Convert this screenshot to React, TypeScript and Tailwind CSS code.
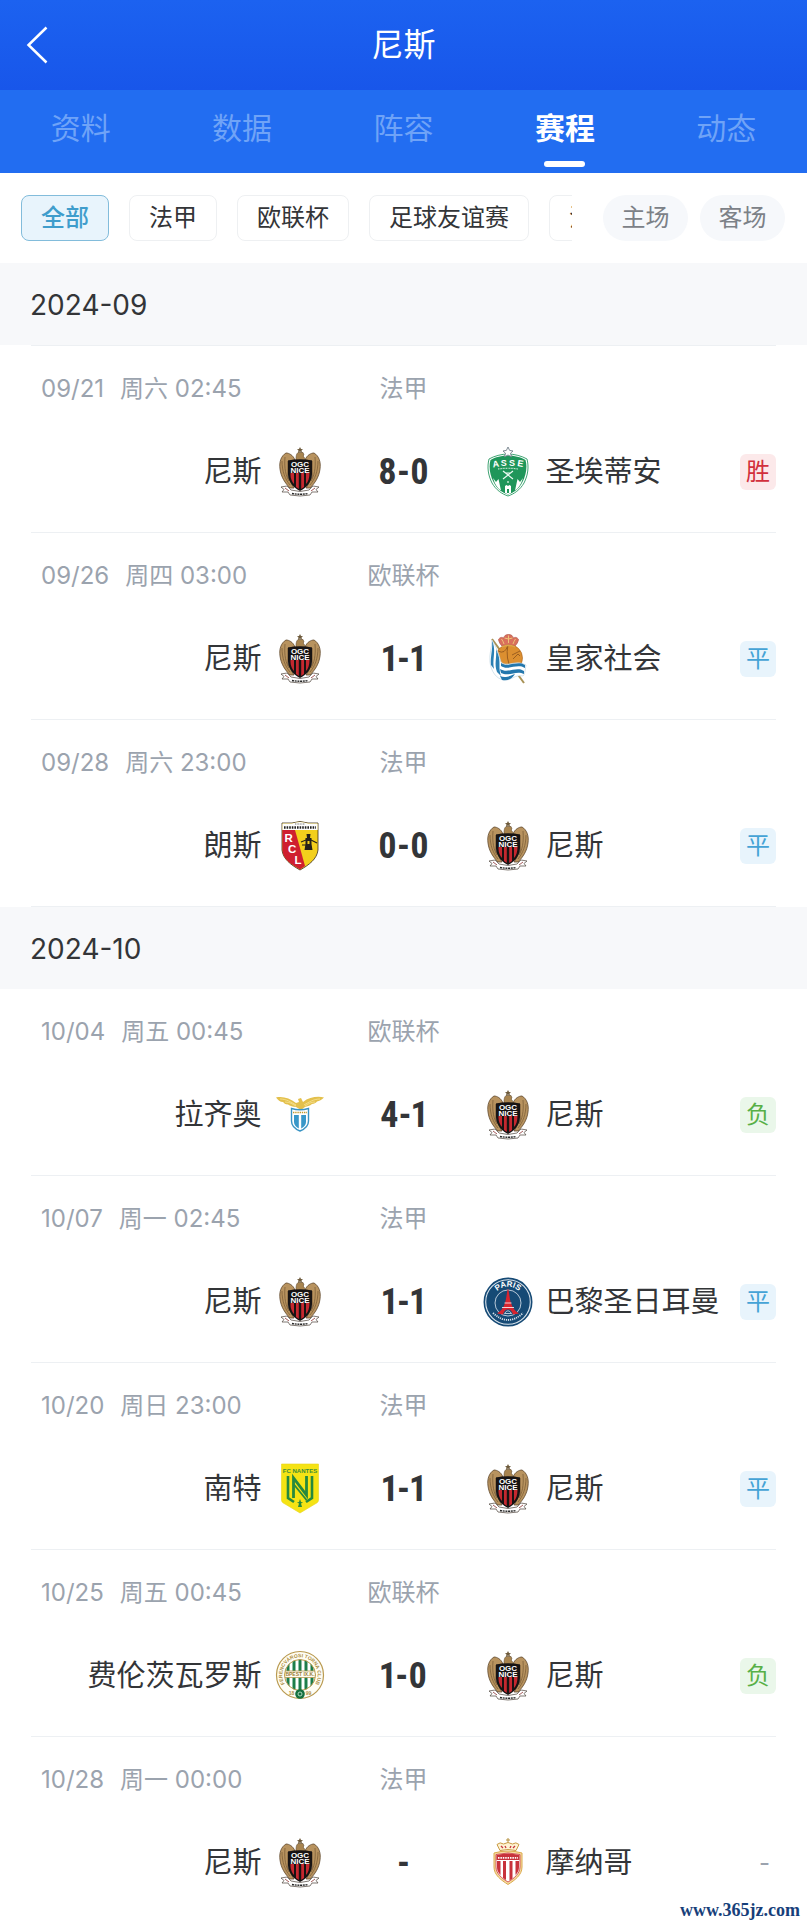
import React, { useState } from 'react';

type TeamKey = 'nice' | 'asse' | 'sociedad' | 'lens' | 'lazio' | 'psg' | 'nantes' | 'ferencvaros' | 'monaco';

interface Match {
  date: string;
  time: string;
  league: string;
  home: TeamKey;
  away: TeamKey;
  score: string;
  result: 'win' | 'draw' | 'loss' | null;
}

const TEAM_NAMES: Record<TeamKey, string> = {
  nice: '尼斯',
  asse: '圣埃蒂安',
  sociedad: '皇家社会',
  lens: '朗斯',
  lazio: '拉齐奥',
  psg: '巴黎圣日耳曼',
  nantes: '南特',
  ferencvaros: '费伦茨瓦罗斯',
  monaco: '摩纳哥',
};

const MONTHS: { month: string; matches: Match[] }[] = [
  {
    month: '2024-09',
    matches: [
      { date: '09/21', time: '周六 02:45', league: '法甲', home: 'nice', away: 'asse', score: '8-0', result: 'win' },
      { date: '09/26', time: '周四 03:00', league: '欧联杯', home: 'nice', away: 'sociedad', score: '1-1', result: 'draw' },
      { date: '09/28', time: '周六 23:00', league: '法甲', home: 'lens', away: 'nice', score: '0-0', result: 'draw' },
    ],
  },
  {
    month: '2024-10',
    matches: [
      { date: '10/04', time: '周五 00:45', league: '欧联杯', home: 'lazio', away: 'nice', score: '4-1', result: 'loss' },
      { date: '10/07', time: '周一 02:45', league: '法甲', home: 'nice', away: 'psg', score: '1-1', result: 'draw' },
      { date: '10/20', time: '周日 23:00', league: '法甲', home: 'nantes', away: 'nice', score: '1-1', result: 'draw' },
      { date: '10/25', time: '周五 00:45', league: '欧联杯', home: 'ferencvaros', away: 'nice', score: '1-0', result: 'loss' },
      { date: '10/28', time: '周一 00:00', league: '法甲', home: 'nice', away: 'monaco', score: '-', result: null },
    ],
  },
];

const TABS = ['资料', '数据', '阵容', '赛程', '动态'];
const LEAGUES = ['全部', '法甲', '欧联杯', '足球友谊赛', '法国杯'];

const RESULTS = {
  win: { label: '胜', style: 'bg-[#fce9ea] text-[#d2303c]' },
  draw: { label: '平', style: 'bg-[#e8f4fc] text-[#45a3d6]' },
  loss: { label: '负', style: 'bg-[#eaf7ea] text-[#58b047]' },
};

function NiceCrest() {
  return (
    <>
      {/* asas */}
      <path d="M19 13 C17 8 13 6 10 6 C5 9 3 15 4 22 C5 30 9 36 14 41 L18 41 L12 30 V14Z" fill="#b8935f" stroke="#5f482c" strokeWidth=".8" />
      <path d="M29 13 C31 8 35 6 38 6 C43 9 45 15 44 22 C43 30 39 36 34 41 L30 41 L36 30 V14Z" fill="#b8935f" stroke="#5f482c" strokeWidth=".8" />
      <path d="M6 14 C6 24 9 32 14 38 M9 10 C8 22 10 29 13 34 M42 14 C42 24 39 32 34 38 M39 10 C40 22 38 29 35 34" stroke="#7d6038" strokeWidth=".8" fill="none" />
      <path d="M20 14 C20 10 20 7 22 5.500 L27 5.500 L28 8 L27 9 C29 11 29 12 29 14Z" fill="#a8844f" stroke="#5f482c" strokeWidth=".6" />
      <path d="M24 0 L25 2 L27 2.200 L25.500 3.500 L26 5.500 L24 4.400 L22 5.500 L22.500 3.500 L21 2.200 L23 2Z" fill="#6d5a3b" />
      <path d="M12 13.500 Q24 11 36 13.500 V27 C36 35 30 41 24 44 C18 41 12 35 12 27Z" fill="#171313" />
      <path d="M14.500 26 H18 V37 C16 35 14.500 31 14.500 28Z M20 26 H22.800 V42 L20 40Z M25.200 26 H28 V40 L25.200 42Z M30 26 H33.500 C33.500 31 32 35 30 37Z" fill="#c5282f" />
      <text x="24" y="19.800" textAnchor="middle" fontSize="8" fontWeight="700" fill="#fff">OGC</text>
      <text x="24" y="26" textAnchor="middle" fontSize="8" fontWeight="700" fill="#fff">NICE</text>
      <path d="M5 40 L11 39 L15 43 Q24 46 33 43 L37 39 L43 40 L40 42.500 L42 45 L36 45 L34 48 Q24 50 14 48 L12 45 L6 45 L8 42.500Z" fill="#fff" stroke="#4b4138" strokeWidth=".7" />
      <path d="M16 46.500 Q24 48 32 46.500" stroke="#222" strokeWidth="1.400" strokeDasharray="2 .7" fill="none" />
      <path d="M9 41 L13 44 M39 41 L35 44" stroke="#8d3030" strokeWidth=".8" />
    </>
  );
}

function AsseCrest() {
  return (
    <>
      <path d="M24 7 C30 7 38 9 43 12 C45 20 44 28 40 36 C36 43 30 47 24 49 C18 47 12 43 8 36 C4 28 3 20 5 12 C10 9 18 7 24 7Z" fill="#fff" stroke="#2b9a64" strokeWidth=".9" />
      <path d="M24 8.500 C30 8.500 37 10 41.500 13 C43.500 20 42 28 38.500 35 C35 42 30 45.500 24 47.500 C18 45.500 13 42 9.500 35 C6 28 4.500 20 6.500 13 C11 10 18 8.500 24 8.500Z" fill="#1f965a" />
      <text x="9" y="20.500" fontSize="9" fontWeight="700" fill="#fff" transform="rotate(-9 9 20)">A</text>
      <text x="16.800" y="19.200" fontSize="9" fontWeight="700" fill="#fff">S</text>
      <text x="25" y="19.200" fontSize="9" fontWeight="700" fill="#fff">S</text>
      <text x="33" y="19" fontSize="9" fontWeight="700" fill="#fff" transform="rotate(9 33 19)">E</text>
      <path d="M14 22 Q24 20.500 34 22" stroke="#c9ead7" strokeWidth="1.200" strokeDasharray="1 .6" fill="none" />
      <path d="M19 24 L29 32 M29 24 L19 32 M21 26 H27" stroke="#eefaf3" strokeWidth="1.200" />
      <circle cx="24" cy="35" r="1" fill="#bfe5cf" />
      <path d="M9 31 L12 35 L14.500 32 L17 43.500 C13 41 10.500 36 9 31Z M39 31 L36 35 L33.500 32 L31 43.500 C35 41 37.500 36 39 31Z" fill="#fff" />
      <path d="M21 46 V39 L22.500 38 L24 39 L25.500 38 L27 39 V46 L24 47.200Z" fill="#fff" />
      <path d="M23 46 V42 H25 V46" fill="#1f965a" />
      <path d="M24 0 L25.600 3.400 L29 4 L26.500 6.200 L27.500 9.800 L24 8 L20.500 9.800 L21.500 6.200 L19 4 L22.400 3.400Z" fill="#fff" stroke="#73808a" strokeWidth=".9" />
    </>
  );
}

function SociedadCrest() {
  return (
    <>
      <path d="M8 5 L40 49" stroke="#a89256" strokeWidth="2" />
      <circle cx="25" cy="24" r="13.500" fill="#dc8f30" stroke="#a9621c" strokeWidth=".6" />
      <path d="M14 17 Q21 21 24 11 M24 11 Q21 24 28 37 M28 21 L36 17 M29 25 L34 20 L36 22" stroke="#8c521c" strokeWidth=".8" fill="none" />
      <path d="M18 12 C16 10 15 8 14.500 5.500 C16 3 18 3 20 4 C20 1.500 22 .5 24.500 .5 C27 .5 29 1.500 29 4 C31 3 33 3 34.500 5.500 C34 8 33 10 31 12 Q24.500 9.500 18 12Z" fill="#d9705c" stroke="#b25345" strokeWidth=".7" />
      <path d="M18 12 Q24.500 9 31 12 V13.500 Q24.500 11 18 13.500Z" fill="#dba547" />
      <path d="M17.500 5 Q19 7 20 10 M24.500 1.500 V9 M31.500 5 Q30 7 29 10 M20.500 4 Q24.500 6 28.500 4" stroke="#edc477" strokeWidth="1" fill="none" />
      <path d="M8 6 C12 12 15 20 17 28 C23 34 31 25 42 31 C41 37 41 40 39 42 C31 40 27 47 20 46 C12 45 7 37 6 28 C5 20 8 13 8 6Z" fill="#fff" stroke="#b8d0df" strokeWidth=".6" />
      <path d="M8 7 C9 15 6 23 7 31 L10 35 C8 25 12 19 9 9Z M12 15 C13 24 10 30 13 38 L17 42 C14 34 17 28 14 20Z" fill="#2a7fb3" />
      <path d="M17 29 C24 34 33 26 41 31 L41 34 C33 29 24 37 17 32Z M16 35 C24 40 32 32 40 37 L40 40 C32 36 25 43 17 39Z M16 42 C22 45 27 41 31 40 C28 45 24 47 18 46Z" fill="#2377ad" />
    </>
  );
}

function LensCrest() {
  return (
    <>
      <path d="M6 2 H16 Q24 -1 32 2 H42 V29 C41 38 33 44 24 49 C15 44 7 38 6 29Z" fill="#f3cf1c" stroke="#3a2d20" strokeWidth=".8" />
      <path d="M6.400 9 H19 L29 45 L24 48.500 C15 43.500 7 38 6.400 29Z" fill="#cf1f2f" />
      <path d="M6.400 2.400 H16 Q24 -.6 32 2.400 H41.600 V9 H6.400Z" fill="#fff" />
      <path d="M8 6.500 H40" stroke="#222" strokeWidth="2.400" strokeDasharray="1.600 1" />
      <path d="M19 3 H29" stroke="#777" strokeWidth="1" strokeDasharray="1 .6" />
      <text x="8.500" y="20.500" fontSize="11.500" fontWeight="700" fill="#fff">R</text>
      <text x="12" y="32" fontSize="11.500" fontWeight="700" fill="#fff">C</text>
      <text x="18.500" y="43" fontSize="11.500" fontWeight="700" fill="#fff">L</text>
      <path d="M30.500 13 H34.500 L34 17 H35.500 V23 L36.500 29 H28.500 L29.500 23 V17 H31Z" fill="#25201a" />
      <path d="M25 21 L30 19 M35 19 L41 22 M26 24 H30" stroke="#25201a" strokeWidth="1.100" />
      <rect x="31.500" y="20" width="2" height="3" fill="#f3cf1c" />
    </>
  );
}

function LazioCrest() {
  return (
    <>
      <path d="M0 7.500 C6 6 14 8 20 13 L23 12 L22 9 L25 8 L27 12 C33 7 42 6 48 7.500 C46 10 43 11 41 11.500 C40 13 38 14 36 14 C34 16 31 16.500 29 17 L25 20 L20 17 C17 17 14 16 12 14.500 C9 14.500 8 13 7 12 C4 12 2 10 0 7.500Z" fill="#e3c04c" />
      <path d="M4 9 C10 9 15 12 20 15 M44 9 C38 9 33 12 28 15 M9 12 C14 12 16 14 20 16 M39 12 C35 12 32 14 29 16" stroke="#fff0b0" strokeWidth=".6" fill="none" />
      <path d="M15.500 18.500 Q24 21 32.500 18.500 V31 C32.500 36 29 39 24 41 C19 39 15.500 36 15.500 31Z" fill="#fff" stroke="#3a94c4" strokeWidth="1.400" />
      <path d="M17 22.500 H31" stroke="#c09a31" strokeWidth="1.600" strokeDasharray="1.400 .8" />
      <path d="M18 25 H22.800 V38.500 C20 37 18 35 18 32Z M25.200 25 H30 V32 C30 35 28 37 25.200 38.500Z" fill="#3897c8" />
    </>
  );
}

function PsgCrest() {
  return (
    <>
      <circle cx="24" cy="25" r="24.500" fill="#164a75" />
      <circle cx="24" cy="25" r="22.300" fill="none" stroke="#dce6ee" strokeWidth="1.100" />
      <circle cx="24" cy="26" r="13" fill="#164a75" stroke="#c9d6e2" strokeWidth=".9" />
      <defs>
        <path id="psg-arc" d="M9.500 19 A16 16 0 0 1 38.500 19" />
      </defs>
      <text fontSize="8" fontWeight="700" fill="#fff" textAnchor="middle">
        <textPath href="#psg-arc" startOffset="50%">PARIS</textPath>
      </text>
      <path d="M24 11.500 C25 13 25.500 22 27 26 C28.500 31 31 34 35 36.500 L29 37.500 C28 34 26.500 32.500 24 32.500 C21.500 32.500 20 34 19 37.500 L13 36.500 C17 34 19.500 31 21 26 C22.500 22 23 13 24 11.500Z" fill="#d8242f" />
      <path d="M18 30.500 H30 M20.500 26 H27.500" stroke="#fff" strokeWidth=".8" />
      <path d="M20.500 36.500 Q24 31 27.500 36.500Z" fill="#164a75" stroke="#dce6ee" strokeWidth=".8" />
      <path d="M9 36 Q24 50 39 36" fill="none" stroke="#d5e0e9" strokeWidth="1.800" strokeDasharray="1.200 .9" />
    </>
  );
}

function NantesCrest() {
  return (
    <>
      <path d="M5.500 0 H42.500 V36 C42.500 38 41 39 39 40 L24 49 L9 40 C7 39 5.500 38 5.500 36Z" fill="#f5e314" stroke="#e8d51d" strokeWidth=".6" />
      <text x="24" y="9" textAnchor="middle" fontSize="6" fontWeight="700" fill="#3f8d37">FC NANTES</text>
      <path d="M12 12 V34 L18 38 M36 12 V34 L30 38" fill="none" stroke="#26893e" strokeWidth="2.600" />
      <path d="M17.500 34 V14 L30.500 31 V12" fill="none" stroke="#26893e" strokeWidth="2.800" />
      <path d="M17.500 20 L30.500 36" stroke="#26893e" strokeWidth="1.800" />
      <path d="M24 35 L25 38 L27 38.500 L25 39.500 L26 43 H22 L23 39.500 L21 38.500 L23 38Z" fill="#26893e" />
    </>
  );
}

function FerencvarosCrest() {
  return (
    <>
      <defs>
        <clipPath id="ftc-inner">
          <circle cx="24" cy="24" r="15.500" />
        </clipPath>
        <path id="ftc-arc" d="M11 36 A17.700 17.700 0 1 1 37 36" />
      </defs>
      <circle cx="24" cy="24" r="23.500" fill="#fffdf4" stroke="#b99a50" strokeWidth="1.200" />
      <circle cx="24" cy="24" r="15.500" fill="#fff" />
      <g clipPath="url(#ftc-inner)">
        <path d="M12 6 V42 M18 6 V42 M24 6 V42 M30 6 V42 M36 6 V42" stroke="#1d7d4a" strokeWidth="3" />
        <rect x="6" y="20" width="36" height="6.500" fill="#fffdf4" stroke="#b99a50" strokeWidth=".8" />
      </g>
      <circle cx="24" cy="24" r="15.500" fill="none" stroke="#b99a50" strokeWidth="1" />
      <text x="24" y="25.200" textAnchor="middle" fontSize="5" fontWeight="700" fill="#9c7d35">BPEST IX.K.</text>
      <text fontSize="5" fontWeight="700" fill="#ad8d43" textAnchor="middle">
        <textPath href="#ftc-arc" startOffset="50%">FERENCVÁROSI TORNA CLUB</textPath>
      </text>
      <text x="15.500" y="43.500" textAnchor="middle" fontSize="5" fontWeight="700" fill="#ad8d43">18</text>
      <text x="32.500" y="43.500" textAnchor="middle" fontSize="5" fontWeight="700" fill="#ad8d43">99</text>
      <circle cx="24" cy="43" r="4.800" fill="#14703f" />
      <circle cx="24" cy="43" r="2" fill="none" stroke="#bfe0cb" strokeWidth=".9" />
    </>
  );
}

function MonacoCrest() {
  return (
    <>
      <path d="M24 0 V5 M22 2 H26" stroke="#b5903e" strokeWidth="1" />
      <path d="M16 12.500 L13 6.500 Q16 3.500 19.500 6 Q24 3 28.500 6 Q32 3.500 35 6.500 L32 12.500 Q24 10.500 16 12.500Z" fill="#fff3d2" stroke="#c99b45" strokeWidth="1" />
      <path d="M17 8 L19 10 M21 8 L22 10 M27 8 L26 10 M31 8 L29 10" stroke="#c4373d" strokeWidth="1.300" fill="none" />
      <path d="M10 15 Q24 11 38 15 V29 C38 37 31 42 24 46.500 C17 42 10 37 10 29Z" fill="#f6dda1" stroke="#dba94e" strokeWidth="1" />
      <path d="M12 16.500 Q24 13.500 36 16.500 V29 C36 35.500 30 40.500 24 44 C18 40.500 12 35.500 12 29Z" fill="#fff" stroke="#c8323b" strokeWidth=".8" />
      <path d="M12.500 17 Q24 14 35.500 17 V22 H12.500Z" fill="#c8323b" />
      <path d="M14 19.800 H34" stroke="#fff" strokeWidth="1.800" strokeDasharray="1.500 .9" />
      <path d="M13 23 H16.500 V37 C14 34.500 13 32 13 29Z M19 23 H22 V42 L19 40Z M25.500 23 H28.500 V40.500 L25.500 42.500Z M31.500 23 H35 V29 C35 32 34 34.500 31.500 37Z" fill="#c8323b" />
    </>
  );
}

const CRESTS: Record<TeamKey, () => React.JSX.Element> = {
  nice: NiceCrest,
  asse: AsseCrest,
  sociedad: SociedadCrest,
  lens: LensCrest,
  lazio: LazioCrest,
  psg: PsgCrest,
  nantes: NantesCrest,
  ferencvaros: FerencvarosCrest,
  monaco: MonacoCrest,
};

function Crest({ team }: { team: TeamKey }) {
  const Drawing = CRESTS[team];
  return (
    <svg viewBox="0 0 48 50" className="w-12 h-[50px] shrink-0 overflow-visible font-['Liberation_Sans',sans-serif]" role="img" aria-label={TEAM_NAMES[team]}>
      <Drawing />
    </svg>
  );
}

function MatchRow({ match }: { match: Match }) {
  const result = match.result ? RESULTS[match.result] : null;

  return (
    <li className="border-b border-[#edf0f3] pt-[27px] pb-[35px]">
      <div className="grid grid-cols-[1fr_160px_1fr] text-2xl leading-8 text-[#9ba3ae]">
        <p className="flex gap-4 pl-[10px] whitespace-nowrap">
          <span>{match.date}</span>
          <span>{match.time}</span>
        </p>
        <p className="text-center">{match.league}</p>
      </div>

      <div className="mt-[42px] grid grid-cols-[1fr_160px_1fr] items-center text-[29px] leading-9 text-[#333538]">
        <div className="flex items-center justify-end gap-[14px] whitespace-nowrap">
          <span>{TEAM_NAMES[match.home]}</span>
          <Crest team={match.home} />
        </div>
        <strong className="text-center font-['Liberation_Sans_Narrow','Roboto_Condensed',sans-serif] text-4xl leading-10 font-bold proportional-nums">
          {match.score}
        </strong>
        <div className="flex items-center gap-[14px] whitespace-nowrap">
          <Crest team={match.away} />
          <span>{TEAM_NAMES[match.away]}</span>
          {result ? (
            <span className={`ml-auto flex size-9 items-center justify-center rounded-md text-2xl leading-9 ${result.style}`}>
              {result.label}
            </span>
          ) : (
            <span className="ml-auto pr-[6px] text-2xl text-[#9ba3ae]">-</span>
          )}
        </div>
      </div>
    </li>
  );
}

export default function TeamSchedulePage() {
  const [tab, setTab] = useState('赛程');
  const [league, setLeague] = useState('全部');

  return (
    <div lang="zh-CN" className="relative w-full bg-white font-['Inter','Noto_Sans_CJK_SC',sans-serif] text-[#333538]">
      <header className="grid h-[90px] grid-cols-[64px_1fr_64px] items-center bg-linear-to-b from-[#1c62f0] to-[#1856ea] text-white">
        <button type="button" aria-label="返回" className="flex h-full items-center pl-[26px]">
          <svg viewBox="0 0 22 38" className="h-[38px] w-[22px]" fill="none" stroke="currentColor" strokeWidth="2.500">
            <path d="M20.500 1.500 L2.500 19 L20.500 36.500" />
          </svg>
        </button>
        <h1 className="text-center text-[32px] leading-10">尼斯</h1>
      </header>

      <nav className="grid grid-cols-5 bg-[#226df1]">
        {TABS.map((item) => (
          <button
            key={item}
            type="button"
            onClick={() => setTab(item)}
            className={`flex flex-col items-center pt-5 pb-[6px] text-3xl leading-9 ${item === tab ? 'font-bold text-white' : 'text-[#6fa3f7]'}`}
          >
            {item}
            <span className={`mt-[15px] h-[6px] w-[41px] rounded-sm ${item === tab ? 'bg-white' : ''}`} />
          </button>
        ))}
      </nav>

      {/* filtros */}
      <div className="flex pt-[22px] pr-[22px] pb-[22px] pl-[21px] text-2xl leading-[44px]">
        <div className="flex min-w-0 flex-1 gap-5 overflow-hidden whitespace-nowrap">
          {LEAGUES.map((item) => (
            <button
              key={item}
              type="button"
              onClick={() => setLeague(item)}
              className={`shrink-0 rounded-lg border px-[19px] ${item === league ? 'border-[#82bcdb] bg-[#e8f4fc] font-medium text-[#3f9dcc]' : 'border-[#eef0f2] bg-white'}`}
            >
              {item}
            </button>
          ))}
        </div>
        <div className="ml-[31px] flex gap-3 text-[#7c8187]">
          <button type="button" className="w-[85px] rounded-full bg-[#f6f8fb]">主场</button>
          <button type="button" className="w-[85px] rounded-full bg-[#f6f8fb]">客场</button>
        </div>
      </div>

      <main>
        {MONTHS.map(({ month, matches }) => (
          <section key={month} className="group">
            <h2 className="bg-[#f7f8fa] px-[30px] pt-6 pb-[22px] text-[28px] leading-9">{month}</h2>
            <ul className="mx-[31px] border-[#edf0f3] group-first:border-t group-last:-mb-1">
              {matches.map((match) => (
                <MatchRow key={match.date} match={match} />
              ))}
            </ul>
          </section>
        ))}
      </main>

      <a
        href="#"
        className="absolute right-[7px] bottom-[2px] font-['Liberation_Serif',serif] text-lg leading-6 font-bold text-[#173f7a]"
      >
        www.365jz.com
      </a>
    </div>
  );
}
